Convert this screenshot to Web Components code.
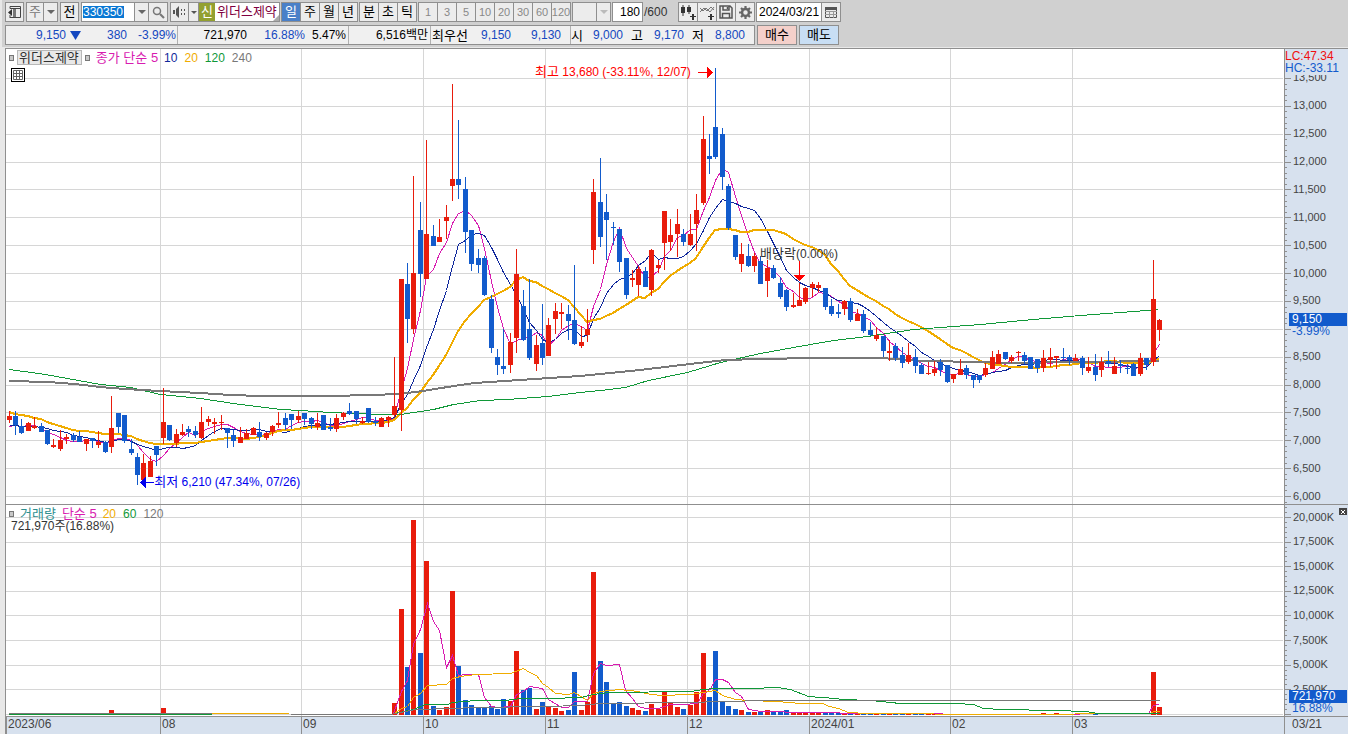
<!DOCTYPE html>
<html lang="ko">
<head>
<meta charset="utf-8">
<meta name="viewport" content="width=device-width, initial-scale=1">
<title>위더스제약 330350</title>
<style>
  html, body { margin: 0; height: 100%; }
  body {
    background: #e8e8e8; color: #000;
    font: 12px/14px "Liberation Sans", "Noto Sans CJK KR", sans-serif;
    --up: #e81c0c; --down: #125bcc; --line: #8f8f8f; --axis: #d7e1ee; --grid: #d6d6d6;
    --ma5: #d81cb0; --ma10: #10289c; --ma20: #f0ac00; --ma60: #109838; --ma120: #787878;
  }
</style>
</head>
<body>
<stock-app></stock-app>

<script>
const define = (name, html, setup) => {
  const t = document.createElement('template');
  t.innerHTML = html;
  customElements.define(name, class extends HTMLElement {
    connectedCallback() {
      if (this.shadowRoot) return;
      const root = this.attachShadow({ mode: 'open' });
      root.append(t.content.cloneNode(true));
      if (setup) setup(this, root);
    }
  });
};

/* One candle per trading day: colour, high, low, body top, body bottom (plot units). */
const CANDLES = `R411,423,416,420 B411,435,416,425 B419,434,426,433 R422,431,423,431 R417,429,426,428 B423,432,426,432
B430,445,430,444 R439,448,445,447 R430,451,440,449 R434,444,437,439 B433,442,435,440 B431,442,437,442 R439,451,439,444
B438,448,438,441 R431,448,442,445 B441,453,442,452 R396,453,428,447 B413,433,413,427 B415,443,415,441 B439,455,449,453
B453,485,457,475 R454,480,463,480 R456,477,461,477 B446,466,446,455 R388,444,422,438 B425,441,425,440 R429,447,434,443
R424,436,432,435 B426,437,429,432 B426,438,431,435 R407,439,422,438 R416,426,419,422 R418,434,422,424 R415,430,422,423
B428,448,428,433 B430,447,435,441 R427,443,437,443 R429,439,433,439 R427,435,428,435 B422,441,432,437 R432,440,433,438
R425,436,426,432 R412,428,423,425 B413,430,418,425 B414,429,414,420 R411,423,416,420 B413,425,413,419 B417,429,418,424
R413,430,423,427 B415,430,415,430 B418,431,427,429 R414,432,418,429 R412,420,413,417 B403,415,411,414 B411,424,411,419
R417,424,421,423 B408,423,408,422 B417,426,421,423 R417,427,418,427 R416,427,417,420 R357,417,406,415 R279,431,279,410
B263,343,284,319 R176,334,273,329 B202,297,230,274 R140,279,234,279 B225,246,236,246 R219,242,237,242 R205,239,217,221
R84,201,179,186 B120,199,179,185 B177,253,189,232 B230,271,230,264 B249,273,258,265 B256,296,258,295 B295,353,299,348
B349,375,357,365 B329,374,366,369 R333,373,342,365 R249,353,274,338 B290,341,306,340 B279,360,329,358 R335,371,345,364
B304,365,343,358 R318,356,325,356 R303,334,311,319 R303,329,312,314 B305,340,314,321 B265,345,320,344 R326,348,342,346
R309,342,329,335 R179,264,192,250 B158,247,202,237 B194,260,212,220 B222,245,227,228 B229,272,229,262 B258,299,258,295
R270,287,278,280 R266,296,269,285 B267,287,271,287 R249,296,250,290 R260,273,265,268 R211,270,211,243 R219,251,235,242
R209,257,224,234 B229,246,234,242 R214,246,234,245 R194,251,210,224 R116,205,139,203 B134,174,156,159 B68,159,127,157
B128,190,134,177 B184,230,186,228 B235,260,235,257 R243,272,254,264 B244,267,256,266 R253,272,256,266 B256,284,261,284
R260,297,268,281 B265,279,268,278 B277,299,283,297 B289,311,290,307 R293,308,305,307 R283,306,300,306 R287,304,288,302
R282,297,284,288 R282,292,285,288 B288,310,288,307 B299,316,306,314 B304,318,312,314 R300,315,301,309 B298,322,301,320
R309,321,314,321 B310,333,314,331 B322,336,330,335 R327,341,335,339 B336,357,336,351 R340,361,351,353 B343,361,346,358
B347,368,355,363 R343,364,355,362 B349,373,357,366 B363,374,365,374 R362,375,373,374 R361,376,369,373 B359,376,362,370
B365,383,365,382 R374,383,374,379 R359,375,369,375 B365,379,368,375 B375,388,375,380 B375,383,375,380 R363,377,368,375
R351,369,357,369 R350,364,354,364 B352,360,352,359 R355,363,357,361 R351,361,352,353 B352,364,355,361 B357,369,357,369
B359,373,359,368 R350,372,358,368 R348,367,357,360 R356,369,356,358 B348,360,357,358 B355,365,357,360 R354,361,358,361
B356,375,358,368 R357,373,367,371 B354,381,367,375 R357,377,362,370 B351,367,361,364 R357,374,366,374 B360,373,364,366
B364,374,368,369 B363,376,364,376 R353,376,358,374 B358,370,358,365 R260,366,299,362 R319,341,320,330`
  .trim().split(/\s+/).map(s => [s[0], ...s.slice(1).split(',').map(Number)]);

/* Top edge of each volume bar, by day index. */
const VOLUME = Array(180).fill(715);
VOLUME[16] = 710; VOLUME[24] = 708;
[703,609,667,520,653,561,706,710,707,591,666,700,705,708,708,706,709,699,701,651,690,688,709,702,707,708,711,710,672,710,
 702,572,661,682,704,702,706,708,710,711,704,709,692,703,707,709,705,692,653,697,651,702,706,709,710,712,712,711,710,712,
 712,710,712,712,712,713,713,713,713,713,713,713,713,713,713,713,713,713,713,713,714,714,714,714,714,714,714,714,714,714]
  .forEach((v, i) => VOLUME[60 + i] = v);
VOLUME[161] = VOLUME[163] = VOLUME[169] = 713;
VOLUME[178] = 672; VOLUME[179] = 707;

const dayX = i => Math.floor(9 + i * 6.4271);
const MONTHS = [160, 301, 423, 545, 687, 809, 950, 1072];
const color = c => c === 'R' ? 'var(--up)' : 'var(--down)';
const rect = (x, y, w, h, f) => `<rect x="${x}" y="${y}" width="${w}" height="${h}" fill="${f}"/>`;
const line = (pts, c, w = 1) => `<polyline points="${pts}" fill="none" stroke="${c}" stroke-width="${w}"${w === 1 ? ' transform="translate(.5 .5)"' : ''}/>`;

/* Moving average over n closes; the leading values are the days before the first candle. */
const closes = [...Array(10).fill(400), ...Array(5).fill(424), ...Array(4).fill(428),
  ...CANDLES.map(c => c[0] === 'R' ? c[3] : c[4])];
const average = n => CANDLES.map((_, i) => {
  const w = closes.slice(i + 20 - n, i + 20);
  return dayX(i) + ',' + Math.round(w.reduce((a, b) => a + b, 0) / w.length);
}).join(' ');

const gridLines = (first, step, count, top, height) => {
  let s = '';
  for (let i = 0; i < count; i++) s += rect(6, Math.round(first + i * step), 1277, 1, 'var(--grid)');
  for (const m of MONTHS) s += rect(m, top, 1, height, 'var(--grid)');
  return s;
};

define('price-plot', `
<style>
  :host { display: block; position: relative; overflow: hidden; background: #fff; min-width: 0; min-height: 0; }
  svg.plot { position: absolute; inset: 0; width: 100%; height: 100%; }
  .note { position: absolute; white-space: nowrap; transform: translateY(-50%); }
  .note b { font-weight: 400; font-size: 13px; }
  .high { left: 41.4%; top: 5.1%; color: #f00; }
  .low { left: 11.6%; top: 95.2%; color: #00e; }
  .exdiv { left: 59%; top: 45%; color: #333; }
</style>
<svg class="plot" viewBox="6 49 1278 455" preserveAspectRatio="none" shape-rendering="crispEdges" aria-label="주가 차트"></svg>
<slot></slot>
<span class="note high"><b>최고</b> 13,680 (-33.11%, 12/07)</span>
<span class="note low"><b>최저</b> 6,210 (47.34%, 07/26)</span>
<span class="note exdiv"><b>배당락</b>(0.00%)</span>`, (el, root) => {
  let s = gridLines(78, 27.87, 16, 49, 455);
  s += line(average(5), 'var(--ma5)') + line(average(10), 'var(--ma10)') + line(average(20), 'var(--ma20)', 2);
  s += line('9,369 45,374 78,380 100,384 130,387 160,394 200,398 233,403 280,409 300,410 330,412 353,413 383,414 400,414 433,409 453,404 480,400 507,399 547,396 580,392 600,390 625,387 648,380 687,372 720,362 760,353 793,347 833,340 867,336 913,329 980,324 1033,319 1080,315 1133,311 1158,309', 'var(--ma60)');
  s += line('9,381 48,382 75,384 100,387 125,389 160,391 200,393 230,395 262,396 330,396 370,395 400,394 423,391 460,385 475,383 520,380 580,376 640,370 690,364 725,360 760,359 815,358 880,358 925,361 980,362 1010,363 1080,362 1159,361', 'var(--ma120)', 2);
  CANDLES.forEach(([c, h, l, t, b], i) => {
    const x = dayX(i), f = color(c);
    s += rect(x, h, 1, l - h, f) + rect(x - 2, t, 5, Math.max(1, b - t), f);
  });
  s += rect(698, 72, 10, 1, '#f00') + '<path d="M707 67l6 5.500-6 5.500z" fill="#f00"/>';
  s += rect(799, 261, 1, 14, '#f00') + '<path d="M794 275h11l-5.500 6z" fill="#f00"/>';
  s += rect(145, 482, 9, 1, '#00e') + '<path d="M146 477l-6 5.500 6 5.500z" fill="#00e"/>';
  root.querySelector('.plot').innerHTML = s;
});

define('volume-plot', `
<style>
  :host { display: block; position: relative; overflow: hidden; background: #fff; min-width: 0; min-height: 0; }
  svg.plot { position: absolute; inset: 0; width: 100%; height: 100%; }
</style>
<svg class="plot" viewBox="6 505 1278 211" preserveAspectRatio="none" shape-rendering="crispEdges" aria-label="거래량 차트"></svg>
<slot></slot>`, (el, root) => {
  let s = gridLines(517, 24.62, 9, 505, 211);
  VOLUME.forEach((v, i) => { if (v < 715) s += rect(dayX(i) - 2, v, 5, 715 - v, color(CANDLES[i][0])); });
  s += line('393,713 401,691 407,680 413,644 420,629 427,603 433,621 439,630 446,667 452,655 458,675 465,674 478,674 484,697 491,706 497,707 510,706 516,694 523,691 529,686 542,688 548,699 561,707 568,707 574,701 587,701 593,673 600,663 606,665 619,664 625,690 632,698 638,706 645,708 658,708 670,704 683,704 697,703 703,693 709,690 715,679 722,679 728,682 735,692 741,696 748,709 760,711 808,712 870,713 1014,714 1148,713 1153,705 1159,704', 'var(--ma5)');
  s += line('394,713 401,708 407,706 413,697 420,693 427,685 446,684 452,678 460,676 475,674 510,673 523,668 529,672 536,675 542,683 548,687 555,693 568,694 574,692 587,700 593,693 600,691 619,689 638,691 645,693 660,695 690,694 703,692 715,690 722,695 735,699 748,700 777,701 800,703 822,703 829,706 838,708 848,712 867,713 1000,714 1150,713 1153,711 1159,711', 'var(--ma20)');
  s += line('390,714 413,709 425,704 447,704 452,702 475,700 505,700 520,698 550,698 580,697 593,694 608,692 690,691 703,689 715,688 750,688 777,687 790,689 808,696 835,698 842,699 870,700 900,703 955,703 973,704 983,708 1002,709 1055,710 1085,711 1098,713 1159,713', 'var(--ma60)');
  s += line('290,714 390,714 400,712 415,709 450,708 475,707 545,706 580,705 600,703 690,702 720,701 770,700 1159,700', 'var(--ma120)');
  s += rect(9, 713, 203, 1, 'var(--ma120)') + rect(9, 714, 203, 1, 'var(--ma60)') + rect(212, 713, 77, 1, 'var(--ma20)');
  root.querySelector('.plot').innerHTML = s;
});

/* Coloured caption of one pane: <pane-legend> with <i> markers and spans passed in. */
define('pane-legend', `
<style>
  :host { position: absolute; left: 3px; top: 1px; display: flex; align-items: center; height: 15px; font-size: 12px; white-space: nowrap; }
  ::slotted(*) { flex: none; }
  ::slotted(i) { width: 3px; height: 4px; margin-right: 3px; border: 1px solid #777; background: #c8c8c8; }
  ::slotted(b) { font-weight: 400; font-size: 13px; line-height: 13px; padding: 0 2px 0 1px; margin-right: 3px; border: 1px solid #b8b8b8; background: #e8e8e8; color: #333; }
  ::slotted(span) { margin-right: 7px; }
  ::slotted(.ko) { font-size: 13px; margin-left: 3px; margin-right: 6px; }
</style>
<slot></slot>`);

/* Value axis. Attributes: labels (| separated), first, step, top, span, inset. */
define('value-axis', `
<style>
  :host { display: flex; flex-direction: column; position: relative; overflow: hidden; background: var(--axis); border-left: 1px solid var(--line); color: #444; font-size: 11px; min-height: 0; }
  svg { position: absolute; left: 0; top: 0; width: 7px; height: 100%; }
  .labels { flex: 1; display: grid; grid-auto-rows: minmax(0, 1fr); align-items: center; padding-left: 8px; min-height: 0; }
  span { line-height: 13px; }
</style>
<svg preserveAspectRatio="none" shape-rendering="crispEdges"></svg>
<div class="labels"></div>
<slot></slot>`, (el, root) => {
  const n = a => Number(el.getAttribute(a));
  const labels = el.getAttribute('labels').split('|');
  const box = root.querySelector('.labels'), svg = root.querySelector('svg');
  box.innerHTML = labels.map(l => `<span>${l}</span>`).join('');
  box.style.margin = el.getAttribute('inset');
  svg.setAttribute('viewBox', `0 ${n('top')} 7 ${n('span')}`);
  let s = '';
  for (let k = -2; k < labels.length * 5; k++)
    s += rect(0, Math.round(n('first') + k * n('step') / 5), k % 5 ? 2 : 6, 1, 'var(--line)');
  svg.innerHTML = s;
});

/* Current value flag lying over an axis. */
define('axis-flag', `
<style>
  :host { position: absolute; left: 4px; right: 1px; color: var(--down); font-size: 12px; line-height: 13px; }
  div { background: var(--down); color: #fff; }
  div, p { margin: 0; padding-left: 3px; height: 13px; }
  p { height: 11px; line-height: 11px; }
</style>
<div><slot name="value"></slot></div><p><slot></slot></p>`);

define('time-axis', `
<style>
  :host { display: grid; grid-template-columns: 154fr 141fr 122fr 122fr 142fr 122fr 141fr 122fr 212fr; background: var(--axis); color: #444; }
  span { min-width: 0; box-sizing: border-box; border-left: 1px solid var(--line); padding-left: 1px; line-height: 15px; }
  span:first-child { border: 0; }
</style>
<span>2023/06</span><span>08</span><span>09</span><span>10</span><span>11</span><span>12</span><span>2024/01</span><span>02</span><span>03</span>`);

/* Toolbar button; "on" marks the chosen period, "dim" an inactive one. */
define('tool-button', `
<style>
  :host { display: block; width: 19px; height: 20px; margin-right: -1px; flex: none; font-size: 13px; }
  :host([wide]) { width: 20px; }
  :host([narrow]) { width: 15px; }
  :host([slim]) { width: 11px; }
  :host([order]) { width: 40px; margin-right: 2px; }
  button { display: flex; align-items: center; justify-content: center; width: 100%; height: 100%; box-sizing: border-box; margin: 0; padding: 0; border: 1px solid var(--line); background: var(--face, #ececec); color: inherit; font: inherit; line-height: 16px; white-space: nowrap; }
  :host([on]) button { background: #4a80c8; color: #fff; }
  :host([dim]) { color: #888; font-size: 11px; }
  ::slotted(svg) { display: block; }
</style>
<button type="button"><slot></slot></button>`);

define('main-toolbar', `
<style>
  :host { display: flex; height: 20px; align-items: stretch; }
  .group { display: flex; margin-right: 3px; }
  .tight { margin-right: 2px; }
  input, select { box-sizing: border-box; height: 20px; margin: 0 -1px 0 0; padding: 0 2px; border: 1px solid var(--line); border-radius: 0; background: #fff; font: inherit; color: #000; appearance: none; outline: 0; }
  select { width: 18px; background: #ececec; color: #777; font-size: 13px; padding: 0 2px; }
  .code { width: 54px; background: linear-gradient(#0a78d4, #0a78d4) 1px 3px / 41px 12px no-repeat #fff; color: #fff; padding: 0 1px; }
  .num { width: 31px; text-align: right; }
  .date { width: 66px; }
  .empty { width: 25px; }
  .title { margin: 0 1px 0 -3px; }
  .name { display: flex; width: 80px; border: 1px solid var(--line); background: #fff; height: 18px; color: #800040; font-size: 13px; line-height: 17px; white-space: nowrap; overflow: hidden; position: relative; }
  .name b { width: 16px; margin-right: 2px; background: #93a030; color: #fff; font-weight: 400; text-align: center; }
  .name::after { content: ""; position: absolute; right: 0; bottom: 0; border: 3px solid transparent; border-right-color: #aaa; border-bottom-color: #aaa; }
  .total { width: 36px; color: #333; line-height: 20px; padding-left: 2px; box-sizing: border-box; }
</style>
<div class="group"><tool-button><svg width="13" height="12" viewBox="0 0 13 12"><path d="M2 .500h10.500v11H2M2 .500v2M2 9v3M2 2.500h10" fill="none" stroke="#444"/><path d="M0 6.500l4-3.500v7z" fill="#333"/><path d="M5 3h3v8H5z" fill="#777"/></svg></tool-button></div>
<div class="group"><select aria-label="종목 구분"><option>주</option></select><tool-button narrow><svg width="8" height="4"><path d="M0 0h8L4 4z" fill="#666"/></svg></tool-button></div>
<div class="group"><tool-button>전</tool-button></div>
<div class="group"><input class="code" aria-label="종목코드" value="330350"><tool-button narrow><svg width="8" height="4"><path d="M0 0h8L4 4z" fill="#666"/></svg></tool-button><tool-button wide><svg width="13" height="13" viewBox="0 0 13 13" fill="none" stroke="#777"><circle cx="5" cy="5" r="3.500" stroke-width="1.500"/><path d="M8 8l4 4" stroke-width="2.200"/></svg></tool-button></div>
<div class="group"><tool-button><svg width="13" height="12" viewBox="0 0 13 12" fill="#555"><path d="M0 4h2v4H0zM3 3l3-3v12L3 9zM8 3h1v2H8zM11 3h1v2h-1zM8 7h1v2H8zM11 7h1v2h-1z"/></svg></tool-button><tool-button slim><svg width="6" height="3"><path d="M0 0h6L3 3z" fill="#555"/></svg></tool-button></div>
<div class="group title"><span class="name"><b>신</b>위더스제약</span></div>
<div class="group tight"><tool-button on wide>일</tool-button><tool-button wide>주</tool-button><tool-button wide>월</tool-button><tool-button wide>년</tool-button></div>
<div class="group tight"><tool-button wide>분</tool-button><tool-button wide>초</tool-button><tool-button wide>틱</tool-button></div>
<div class="group tight"><tool-button wide dim>1</tool-button><tool-button wide dim>3</tool-button><tool-button wide dim>5</tool-button><tool-button wide dim>10</tool-button><tool-button wide dim>20</tool-button><tool-button wide dim>30</tool-button><tool-button wide dim>60</tool-button><tool-button wide dim>120</tool-button></div>
<div class="group tight"><select class="empty" aria-label="분 단위"><option></option></select><tool-button narrow><svg width="8" height="4"><path d="M0 0h8L4 4z" fill="#bbb"/></svg></tool-button></div>
<input class="num" aria-label="표시 봉수" value="180"><span class="total">/600</span>
<div class="group tight">
<tool-button wide><svg width="15" height="15" viewBox="0 0 15 15" fill="#333"><path d="M0 2h4v6H0zM1.500 0h1v11h-1zM6 2h4v5H6zM7.500 0h1v9h-1zM11 9h2v2h2v1h-2v3h-2v-3H9v-1h2z"/></svg></tool-button>
<tool-button wide><svg width="15" height="15" viewBox="0 0 15 15"><path d="M0 7l4-4 3 3 4-4 3 3M0 3l3 3 3-3 4 4 4-5" fill="none" stroke="#777"/><path d="M10 9h2v2h2v1h-2v3h-2v-3H8v-1h2z" fill="#333"/></svg></tool-button>
<tool-button wide><svg width="14" height="14" viewBox="0 0 14 14" fill="none" stroke="#555" stroke-width="1.500"><path d="M1 1h10l2 2v10H1zM4 1v4h6V1M3.500 13V8.500h7V13"/><path d="M8.500 2v2"/></svg></tool-button>
<tool-button wide><svg width="13" height="13" viewBox="0 0 13 13" fill="none" stroke="#666"><circle cx="6.500" cy="6.500" r="3.500" stroke-width="2.500"/><path d="M6.500 0v2.500M6.500 10.500V13M0 6.500h2.500M10.500 6.500H13M2 2l1.800 1.800M9.200 9.200L11 11M11 2L9.200 3.800M3.800 9.200L2 11" stroke-width="2.200"/></svg></tool-button></div>
<input class="date" aria-label="조회일" value="2024/03/21"><tool-button wide><svg width="12" height="11" viewBox="0 0 12 11" fill="none" stroke="#555"><path d="M.500 1.500h11v9H.500z"/><path d="M0 4.500h12M0 7.500h12M4.500 4v7M8.500 4v7" stroke="#999"/><path d="M0 1.500h12" stroke-width="3"/></svg></tool-button>`);

define('quote-strip', `
<style>
  :host { display: flex; height: 20px; }
  .quotes { display: flex; box-sizing: border-box; width: 750px; border: 1px solid var(--line); background: #f0f0f0; margin-right: 2px; line-height: 19px; color: #1448c0; white-space: nowrap; }
  .cell { display: grid; text-align: right; box-sizing: border-box; border-right: 1px solid #b0b0b0; flex: none; padding-right: 2px; }
  .now { grid-template-columns: 60px 15px 46px 49px; width: 172px; }
  .now svg { align-self: center; justify-self: end; }
  .vol { grid-template-columns: 69px 58px 41px; width: 171px; }
  .amt { width: 82px; }
  .best { grid-template-columns: 37px 43px 50px; width: 140px; }
  .day { grid-template-columns: 11px 41px 20px 41px 20px 41px; border: 0; width: 176px; }
  em { font-style: normal; color: #000; }
  em.k { font-size: 13px; }
</style>
<div class="quotes">
  <div class="cell now"><span>9,150</span><svg width="11" height="9"><path d="M0 0h11L5.500 9z" fill="#1448c0"/></svg><span>380</span><span>-3.99%</span></div>
  <div class="cell vol"><em>721,970</em><span>16.88%</span><em>5.47%</em></div>
  <div class="cell amt"><em>6,516백만</em></div>
  <div class="cell best"><em class="k">최우선</em><span>9,150</span><span>9,130</span></div>
  <div class="cell day"><em class="k">시</em><span>9,000</span><em class="k">고</em><span>9,170</span><em class="k">저</em><span>8,800</span></div>
</div>
<tool-button order style="--face:#f4d0ca">매수</tool-button><tool-button order style="--face:#c8def4">매도</tool-button>`);

define('stock-app', `
<style>
  :host { display: grid; grid-template-rows: 48px minmax(0, 1fr); min-height: 400px; height: 100vh; overflow: hidden; }
  header { display: flex; flex-direction: column; gap: 3px; box-sizing: border-box; margin-left: 2px; padding: 2px 0 0 3px; background: #d0d0d0; border-bottom: 1px solid #e8e8e8; }
  main { display: grid; margin-left: 5px; border-left: 1px solid var(--line); border-top: 1px solid var(--line);
    grid-template-columns: minmax(0, 1fr) 64px; grid-template-rows: minmax(0, 455fr) minmax(0, 211fr) 17px; row-gap: 1px; background: var(--line); }
  .lchc { position: absolute; left: 0; top: 1px; width: 63px; height: 25px; background: var(--axis); font-size: 12px; line-height: 12px; color: var(--down); white-space: nowrap; }
  .lchc span { display: block; color: #f01010; }
  .table-view { position: absolute; left: 5px; top: 19px; width: 14px; height: 14px; padding: 0; border: 1px solid #000; background: #fff; display: grid; place-items: center; }
  .vol-now { position: absolute; left: 5px; top: 14px; color: #333; }
  .close { position: absolute; right: 1px; top: 3px; width: 8px; height: 7px; padding: 0; border: 0; background: #444; display: grid; place-items: center; }
  .today { background: var(--axis); border-left: 1px solid var(--line); padding-left: 7px; line-height: 15px; color: #444; }
</style>
<header><main-toolbar></main-toolbar><quote-strip></quote-strip></header>
<main>
  <price-plot>
    <pane-legend><i></i><b>위더스제약</b><i></i><span class="ko" style="color:var(--ma5)">종가 단순 5</span><span style="color:var(--ma10)">10</span><span style="color:var(--ma20)">20</span><span style="color:var(--ma60)">120</span><span style="color:var(--ma120)">240</span></pane-legend>
    <button class="table-view" aria-label="표 보기"><svg width="10" height="10" viewBox="0 0 10 10" fill="none" stroke="#666"><path d="M.500.500h9v9h-9zM0 3.500h10M0 6.500h10M3.500 0v10M6.500 0v10"/></svg></button>
  </price-plot>
  <value-axis inset="15px 0 -6px" top="49" span="455" first="78" step="27.87" labels="13,500|13,000|12,500|12,000|11,500|11,000|10,500|10,000|9,500||8,500|8,000|7,500|7,000|6,500|6,000">
    <div class="lchc"><span>LC:47.34</span>HC:-33.11</div>
    <axis-flag style="top:58%"><span slot="value">9,150</span>-3.99%</axis-flag>
  </value-axis>
  <volume-plot>
    <pane-legend><i></i><span class="ko" style="color:#2e9090">거래량</span><span class="ko" style="color:var(--ma5);margin-left:0">단순 5</span><span style="color:var(--ma20)">20</span><span style="color:var(--ma60)">60</span><span style="color:var(--ma120)">120</span></pane-legend>
    <span class="vol-now">721,970주(16.88%)</span>
  </volume-plot>
  <value-axis inset="0 0 -10px" top="505" span="211" first="517" step="24.62" labels="20,000K|17,500K|15,000K|12,500K|10,000K|7,500K|5,000K|2,500K|">
    <button class="close" aria-label="닫기"><svg width="4" height="4" viewBox="0 0 4 4" stroke="#fff"><path d="M0 0l4 4M4 0L0 4"/></svg></button>
    <axis-flag style="top:87.700%"><span slot="value">721,970</span>16.88%</axis-flag>
  </value-axis>
  <time-axis></time-axis>
  <div class="today">03/21</div>
</main>`);
</script>
</body>
</html>
